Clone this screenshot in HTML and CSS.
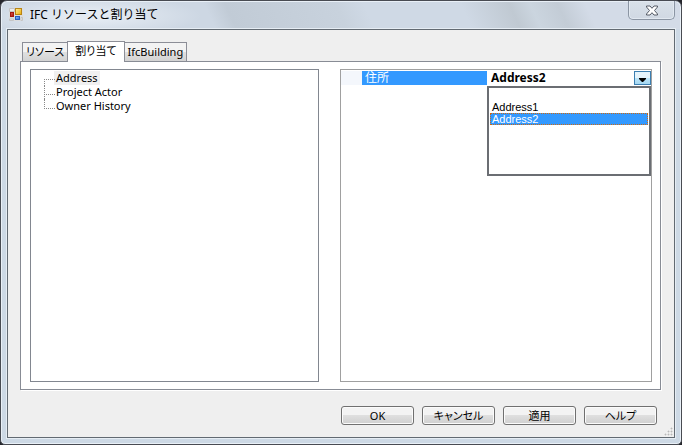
FILE: index.html
```html
<!DOCTYPE html>
<html lang="ja">
<head>
<meta charset="utf-8">
<title>IFC リソースと割り当て</title>
<link rel="stylesheet" href="styles.css">
</head>
<body>
<div class="window">
  <header class="titlebar">
    <svg class="app-icon" width="14" height="14" viewBox="0 0 14 14" aria-hidden="true">
      <defs>
        <linearGradient id="gold" x2="1" y2="1"><stop stop-color="#fff0a0"/><stop offset="1" stop-color="#e8a800"/></linearGradient>
        <linearGradient id="red" x2="1" y2="1"><stop stop-color="#e06050"/><stop offset="1" stop-color="#a80c08"/></linearGradient>
        <linearGradient id="blue" x2="1" y2="1"><stop stop-color="#90c0ff"/><stop offset="1" stop-color="#2868d8"/></linearGradient>
      </defs>
      <path d="M0 0h14v13H0z" fill="#dcdcdc"/>
      <path d="M.5 .5h5v3h-5zM.5 11h4v1.500h-4zM12 9.500h1.500v3H12z" fill="#ececec" stroke="#c4c4c4"/>
      <rect x="6.500" y=".5" width="6" height="6" fill="url(#gold)" stroke="#b98514"/>
      <rect x="1.500" y="4.500" width="3" height="4" fill="url(#red)" stroke="#a41810"/>
      <rect x="6.500" y="8.500" width="4" height="3" fill="url(#blue)" stroke="#2860c0"/>
    </svg>
    <h1 class="title">IFC リソースと割り当て</h1>
    <button class="close" type="button" aria-label="閉じる">
      <svg width="12" height="11" viewBox="0 0 12 11" aria-hidden="true">
        <path d="M.5 1h3.500L6 3.300 8 1h3.500v1L8.500 5.500l3 3.500v1H8L6 7.700 4 10H.5V9l3-3.500L.5 2z" fill="#fff" stroke="#555b66"/>
      </svg>
    </button>
  </header>
  <main class="client">
    <div class="tabs" role="tablist">
      <button class="tab" type="button" role="tab">リソース</button>
      <button class="tab tab-active" type="button" role="tab" aria-selected="true">割り当て</button>
      <button class="tab" type="button" role="tab">IfcBuilding</button>
    </div>
    <section class="panel" role="tabpanel">
      <ul class="tree" role="tree">
        <li class="node" role="treeitem"><span class="node-label node-selected">Address</span></li>
        <li class="node" role="treeitem"><span class="node-label">Project Actor</span></li>
        <li class="node" role="treeitem"><span class="node-label">Owner History</span></li>
      </ul>
      <div class="grid">
        <div class="property">
          <label class="property-name" for="address">住所</label>
          <div class="property-value">
            <select class="select" id="address">
              <option></option>
              <option>Address1</option>
              <option selected>Address2</option>
            </select>
            <span class="arrow"><svg width="7" height="4" viewBox="0 0 7 4" aria-hidden="true"><path d="M0 0h7v1L4 4H3L0 1z"/></svg></span>
            <ul class="options" role="listbox">
              <li class="option" role="option"></li>
              <li class="option" role="option">Address1</li>
              <li class="option option-selected" role="option" aria-selected="true">Address2</li>
            </ul>
          </div>
        </div>
      </div>
    </section>
    <footer class="actions">
      <button class="button" type="button">OK</button>
      <button class="button" type="button">キャンセル</button>
      <button class="button" type="button">適用</button>
      <button class="button" type="button">ヘルプ</button>
    </footer>
    <svg class="grip" width="9" height="9" viewBox="0 0 9 9" aria-hidden="true">
      <path d="M7 1h1v1H7zM4 4h1v1H4zM7 4h1v1H7zM1 7h1v1H1zM4 7h1v1H4zM7 7h1v1H7z" fill="#aaa" stroke="#bbb" stroke-width=".8"/>
    </svg>
  </main>
</div>
</body>
</html>
```
FILE: styles.css
```css
* {
  box-sizing: border-box;
}

body {
  margin: 0;
  background: #25262c;
  color: #000;
  font: 11px/14px "Noto Sans", "Noto Sans CJK JP", sans-serif;
  font-feature-settings: "palt";
}

button,
select {
  margin: 0;
  padding: 0;
  color: inherit;
  font: inherit;
  font-feature-settings: inherit;
}

ul {
  margin: 0;
  padding: 0;
  list-style: none;
}

.window {
  display: flex;
  flex-direction: column;
  min-height: 100vh;
  padding: 0 6px 6px;
  border: 1px solid #484b52;
  border-radius: 7px 7px 5px 5px;
  background:
    radial-gradient(ellipse 110px 20px at 90px 15px, #e3eaf2 20%, transparent),
    linear-gradient(65deg, #cdd7e3 0 31%, #c1cbd6 34%, #c8d2dd 50%, #cfd9e5 54% 68%, #c0c9d2 75%, #cbd5df 78%, #c3ccd6 82%, #d3dbe7 86%) 0 0 / 100% 28px no-repeat,
    #cdd9e5;
  box-shadow: inset 0 0 0 1px #e9f0f7;
}

.titlebar {
  display: flex;
  align-items: center;
  height: 28px;
  padding-left: 2px;
}

.app-icon {
  flex: none;
}

.title {
  flex: 1;
  margin: 0 0 0 7px;
  font: 12px/18px "Noto Sans", "Noto Sans CJK JP", sans-serif;
  font-feature-settings: normal;
}

.close {
  display: flex;
  align-self: flex-start;
  justify-content: center;
  width: 47px;
  height: 19px;
  padding-top: 4px;
  border: 1px solid #8b95a3;
  border-top: 0;
  border-radius: 0 0 5px 5px;
  background: linear-gradient(#d9e1e9, #d0d8e3);
  box-shadow: inset 0 0 0 1px #e2e9f1;
}

.client {
  position: relative;
  display: flex;
  flex: 1;
  flex-direction: column;
  padding: 11px 13px 12px 12px;
  border: 1px solid #626a72;
  background: #efefef;
  box-shadow: 0 0 0 1px #e6edf4;
}

.tabs {
  display: flex;
  align-items: flex-end;
  padding-left: 2px;
}

.tab {
  height: 19px;
  padding: 0 3px;
  border: 1px solid #8c8e97;
  border-bottom: 0;
  background: linear-gradient(#f3f3f3 50%, #e0e0e0 50%, #d3d3d3);
}

.tab-active {
  z-index: 1;
  height: 21px;
  margin: 0 -1px -1px;
  padding: 0 7px 2px;
  background: #fff;
}

.panel {
  display: grid;
  flex: 1;
  grid-template-columns: 289fr 312fr;
  gap: 21px;
  padding: 7px 8px 7px 9px;
  border: 1px solid #888c95;
  background: #fff;
  box-shadow: 1px 1px 0 #fff;
}

.tree {
  padding: 1px 13px;
  border: 1px solid #828790;
}

.node {
  position: relative;
  display: flex;
  height: 14px;
  padding-left: 10px;
}

.node::before {
  position: absolute;
  top: 0;
  left: 0;
  width: 10px;
  height: 9px;
  border: dotted #888;
  border-width: 0 0 1px 1px;
  content: "";
}

.node:first-child::before {
  top: 8px;
  height: 6px;
  border-width: 1px 0 0 1px;
}

.node:not(:first-child):not(:last-child)::after {
  position: absolute;
  top: 9px;
  left: 0;
  height: 5px;
  border-left: 1px dotted #888;
  content: "";
}

.node-label {
  padding: 0 2px;
}

.node-selected {
  background: #f0f0f0;
}

.grid {
  padding: 1px 0;
  border: 1px solid #a0a0a0;
}

.property {
  display: grid;
  grid-template-columns: 125fr 164fr;
  height: 14px;
  padding-left: 21px;
  background: #f4f7fc;
}

.property-name {
  padding-left: 3px;
  background: #3399ff;
  color: #fff;
  font-size: 12px;
}

.property-value {
  position: relative;
  display: flex;
  background: #fff;
}

.select {
  flex: 1;
  height: 14px;
  padding-left: 4px;
  border: 0;
  appearance: none;
  background: #fff;
  font-size: 12px;
  font-weight: bold;
  line-height: 14px;
}

.arrow {
  position: absolute;
  top: 0;
  right: 0;
  display: flex;
  align-items: flex-end;
  justify-content: center;
  width: 17px;
  height: 14px;
  padding-bottom: 2px;
  border: 1px solid #3c7fb1;
  background: linear-gradient(#e5f4fc 50%, #bde5f9 50%, #a5d8f2);
  pointer-events: none;
}

.options {
  position: absolute;
  z-index: 2;
  top: 15px;
  right: 0;
  left: 0;
  height: 90px;
  padding: 1px;
  border: 2px solid #6b6e73;
  background: #fff;
  font-family: "Liberation Sans", sans-serif;
  line-height: 12px;
}

.option {
  height: 12px;
  padding-left: 2px;
}

.option-selected {
  padding-left: 1px;
  border: 1px dotted #d06a10;
  background: #3399ff;
  color: #fff;
  line-height: 10px;
}

.actions {
  display: flex;
  justify-content: flex-end;
  gap: 8px;
  padding: 16px 4px 0 0;
}

.button {
  width: 73px;
  height: 19px;
  border: 1px solid #707070;
  border-radius: 3px;
  background: linear-gradient(#f3f3f3 50%, #dfdfdf 50%, #cfcfcf);
  box-shadow: inset 0 0 0 1px #fbfbfb;
  line-height: 17px;
}

.grip {
  position: absolute;
  right: 1px;
  bottom: 1px;
}
```
